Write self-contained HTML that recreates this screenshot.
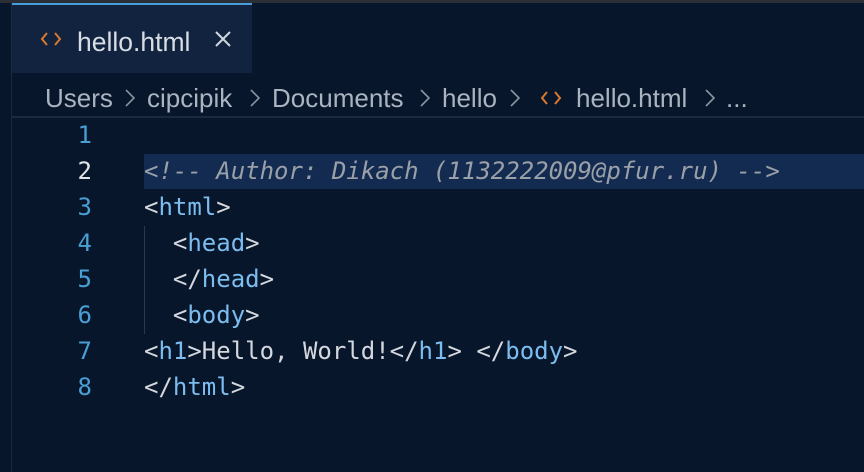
<!DOCTYPE html>
<html><head><meta charset="utf-8"><style>
body{margin:0;width:864px;height:472px;background:#07162a;overflow:hidden;position:relative;font-family:"Liberation Sans",sans-serif}
.top{position:absolute;left:0;top:0;width:864px;height:3px;background:#2a2f36}
.leftbar{position:absolute;left:11px;top:3px;width:1px;height:469px;background:#1a2a40}
.tab{position:absolute;left:12px;top:3px;width:240px;height:70px;background:#122340;border-top:2px solid #4a9ddb;box-sizing:border-box}
.tab .t{position:absolute;left:65px;top:22px;font-size:26.5px;color:#d8dde4}
.bcw{position:absolute;top:83px;font-size:26px;color:#aab4c0;white-space:pre}
svg{position:absolute}
.sep{position:absolute;left:12px;top:116px;width:852px;height:2px;background:#1a2a40}
.code{position:absolute;left:0;top:117px;width:864px;font-family:"DejaVu Sans Mono",monospace;font-size:24px}
.ln{position:absolute;height:36px;line-height:36px}
.num{position:absolute;left:70px;width:22px;text-align:right;color:#4a9fd4}
.txt{position:absolute;left:144px;color:#d4d8de;white-space:pre}
.tg{color:#7cbcef}
.hl{position:absolute;left:144px;top:154px;width:720px;height:35px;background:#132b50}
.guide{position:absolute;left:144px;top:226px;width:1px;height:108px;background:#253a55}
</style></head><body>
<div class="top"></div><div class="leftbar"></div>
<div class="tab"><span class="t">hello.html</span></div>
<svg style="left:40px;top:31px" width="22" height="16" viewBox="0 0 22 16"><path d="M7 2L2 8L7 14M15 2L20 8L15 14" fill="none" stroke="#d9782f" stroke-width="2"/></svg>
<svg style="left:215px;top:31px" width="16" height="16" viewBox="0 0 16 16"><path d="M1 1L15 15M15 1L1 15" fill="none" stroke="#d0d6de" stroke-width="2"/></svg>
<span class="bcw" style="left:45px">Users</span>
<span class="bcw" style="left:147px">cipcipik</span>
<span class="bcw" style="left:272px">Documents</span>
<span class="bcw" style="left:442px">hello</span>
<span class="bcw" style="left:576px">hello.html</span>
<span class="bcw" style="left:726px">...</span>
<svg style="left:124px;top:88px" width="12" height="20" viewBox="0 0 12 20"><path d="M2 2L10 10L2 18" fill="none" stroke="#8a94a0" stroke-width="1.6"/></svg>
<svg style="left:249px;top:88px" width="12" height="20" viewBox="0 0 12 20"><path d="M2 2L10 10L2 18" fill="none" stroke="#8a94a0" stroke-width="1.6"/></svg>
<svg style="left:419px;top:88px" width="12" height="20" viewBox="0 0 12 20"><path d="M2 2L10 10L2 18" fill="none" stroke="#8a94a0" stroke-width="1.6"/></svg>
<svg style="left:509px;top:88px" width="12" height="20" viewBox="0 0 12 20"><path d="M2 2L10 10L2 18" fill="none" stroke="#8a94a0" stroke-width="1.6"/></svg>
<svg style="left:704px;top:88px" width="12" height="20" viewBox="0 0 12 20"><path d="M2 2L10 10L2 18" fill="none" stroke="#8a94a0" stroke-width="1.6"/></svg>
<svg style="left:540px;top:90px" width="22" height="16" viewBox="0 0 22 16"><path d="M7 2L2 8L7 14M15 2L20 8L15 14" fill="none" stroke="#d9782f" stroke-width="2"/></svg>
<div class="sep"></div>
<div class="hl"></div><div class="guide"></div>
<div class="code">
<div class="ln" style="top:0"><span class="num">1</span></div>
<div class="ln" style="top:36px"><span class="num" style="color:#e0e4ea">2</span><span class="txt" style="color:#9aa0a8;font-style:italic">&lt;!-- Author: Dikach (1132222009@pfur.ru) --&gt;</span></div>
<div class="ln" style="top:72px"><span class="num">3</span><span class="txt">&lt;<span class="tg">html</span>&gt;</span></div>
<div class="ln" style="top:108px"><span class="num">4</span><span class="txt">  &lt;<span class="tg">head</span>&gt;</span></div>
<div class="ln" style="top:144px"><span class="num">5</span><span class="txt">  &lt;/<span class="tg">head</span>&gt;</span></div>
<div class="ln" style="top:180px"><span class="num">6</span><span class="txt">  &lt;<span class="tg">body</span>&gt;</span></div>
<div class="ln" style="top:216px"><span class="num">7</span><span class="txt">&lt;<span class="tg">h1</span>&gt;Hello, World!&lt;/<span class="tg">h1</span>&gt; &lt;/<span class="tg">body</span>&gt;</span></div>
<div class="ln" style="top:252px"><span class="num">8</span><span class="txt">&lt;/<span class="tg">html</span>&gt;</span></div>
</div>
</body></html>
